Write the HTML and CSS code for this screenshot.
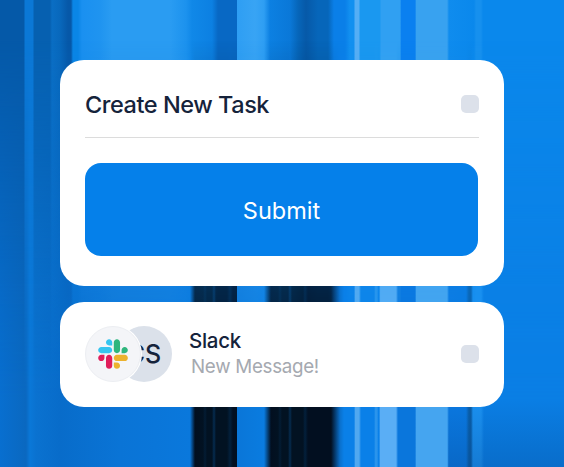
FILE: index.html
```html
<!DOCTYPE html>
<html lang="en">
<head>
<meta charset="utf-8">
<title>Create New Task</title>
<link rel="stylesheet" href="styles.css">
</head>
<body>
<div class="fade" aria-hidden="true"></div>
<main class="stack">
  <section class="card task">
    <header class="task-head">
      <h1 class="title">Create New Task</h1>
      <span class="check"></span>
    </header>
    <button class="submit" type="button">Submit</button>
  </section>
  <section class="card notify">
    <div class="avatars">
      <span class="avatar initials">CS</span>
      <span class="avatar logo">
        <svg class="slack" viewBox="0 0 127 127" aria-hidden="true">
          <path d="M27.2 80c0 7.3-5.9 13.2-13.2 13.2C6.7 93.2.8 87.3.8 80c0-7.3 5.9-13.2 13.2-13.2h13.2V80zm6.6 0c0-7.3 5.9-13.2 13.2-13.2 7.3 0 13.2 5.9 13.2 13.2v33c0 7.3-5.9 13.2-13.2 13.2-7.3 0-13.2-5.9-13.2-13.2V80z" fill="#E01E5A"/>
          <path d="M47 27c-7.3 0-13.2-5.9-13.2-13.2C33.8 6.5 39.7.6 47 .6c7.3 0 13.2 5.9 13.2 13.2V27H47zm0 6.7c7.3 0 13.2 5.9 13.2 13.2 0 7.3-5.9 13.2-13.2 13.2H13.9C6.6 60.1.7 54.2.7 46.9c0-7.3 5.9-13.2 13.2-13.2H47z" fill="#36C5F0"/>
          <path d="M99.9 46.9c0-7.3 5.9-13.2 13.2-13.2 7.3 0 13.2 5.9 13.2 13.2 0 7.3-5.9 13.2-13.2 13.2H99.9V46.9zm-6.6 0c0 7.3-5.9 13.2-13.2 13.2-7.3 0-13.2-5.9-13.2-13.2V13.8C66.9 6.5 72.8.6 80.1.6c7.3 0 13.2 5.9 13.2 13.2v33.1z" fill="#2EB67D"/>
          <path d="M80.1 99.8c7.3 0 13.2 5.9 13.2 13.2 0 7.3-5.9 13.2-13.2 13.2-7.3 0-13.2-5.9-13.2-13.2V99.8h13.2zm0-6.6c-7.3 0-13.2-5.9-13.2-13.2 0-7.3 5.9-13.2 13.2-13.2h33.1c7.3 0 13.2 5.9 13.2 13.2 0 7.3-5.9 13.2-13.2 13.2H80.1z" fill="#ECB22E"/>
        </svg>
      </span>
    </div>
    <div class="message">
      <div class="sender">Slack</div>
      <div class="preview">New Message!</div>
    </div>
    <span class="check"></span>
  </section>
</main>
</body>
</html>
```

FILE: styles.css
```css
* { box-sizing: border-box; }
html, body { margin: 0; height: 467px; overflow: hidden; }
body {
  position: relative;
  font-family: Inter, "Liberation Sans", sans-serif;
  background: linear-gradient(90deg,
    #0559a8 0, #0559a8 24px, #0b78d6 25px, #0b78d6 33px, #0660b0 34px, #0660b0 50px,
    #0a6ec4 52px, #0868bc 60px, #0658a8 68px, #0658a8 71px, #0a86e6 73px, #0a86e6 78px,
    #1a90f0 82px, #1f94f0 100px, #2a9cf2 112px, #2a9cf2 170px, #1c92ee 186px,
    #1088e8 192px, #0c80e2 212px, #0868c4 218px, #0868c4 236.5px, #2e9ef3 237px,
    #38a4f4 255px, #2e9ef3 264px, #0c80e2 270px, #0a78d8 290px, #0666ba 298px,
    #0659a8 306px, #0666ba 318px, #0666ba 328px, #0a7fe8 334px, #0a7fe8 345px,
    #1290f0 350px, #1290f0 354px, #55aef5 355px, #55aef5 359px, #1a98f0 360px,
    #1a98f0 380px, #30a0f2 381px, #30a0f2 400px, #0a80f0 401.5px, #0a80f0 415px,
    #38a2f0 416.5px, #38a2f0 447px, #0f8cee 449px, #0a88ec 474px, #1690ee 476px,
    #1690ee 481px, #0a88ec 483px, #0a88ec 564px);
}
.fade {
  position: absolute;
  inset: 0;
  background:
    linear-gradient(180deg, transparent 400px, rgba(4, 48, 110, .22) 467px) right top / 116px 100% no-repeat,
    linear-gradient(90deg,
    #086fd0 0, #0a68c0 26px, #0a78d8 30px, #0a72d0 36px, #086cca 60px, #0a74d6 120px,
    #0a78dc 190px, #020f20 195px, #021222 203px, #031c34 205px, #021222 207px, #021222 212px,
    #052c50 214px, #021222 216px, #021222 227px, #03203c 230px, #020f20 233px, #020f20 236.5px,
    #0a76d8 237px, #0a7ce0 264px, #020f20 271px, #021222 278px, #031c34 280px, #021222 282px,
    #021222 288px, #052c50 290px, #021222 292px, #021222 303px, #03203c 305px, #020f20 308px,
    #020f20 331px, #0a70cc 340px, #0a80e8 344px, #0a80e8 354px, #50a8f0 355.5px,
    #50a8f0 359px, #0a80e8 361px, #0a80e8 374px, #2a94ec 375.5px, #2a94ec 377px,
    #0a80e8 378.5px, #0a80e8 379px, #5aaef5 380.5px, #5aaef5 396px, #0a76dc 398px,
    #0a76dc 415px, #45a5f0 416.5px, #45a5f0 447px, #0a78e0 449px, #0a78e0 466px,
    #0a5ea8 469px, #0a5ea8 471px, #1a90f0 473px, #1a90f0 481px, #0a7ee4 484px, #0a7ee4 564px);
  -webkit-mask-image: linear-gradient(180deg, transparent 40px, rgba(0, 0, 0, .78) 294px, #000 400px);
  mask-image: linear-gradient(180deg, transparent 40px, rgba(0, 0, 0, .78) 294px, #000 400px);
}
.stack {
  position: relative;
  display: flex;
  flex-direction: column;
  gap: 16px;
  width: 444px;
  margin-left: 60px;
  padding-top: 60px;
}
.card { background: #fff; border-radius: 24px; }
.task { height: 226px; padding: 0 25px; }
.task-head {
  display: flex;
  align-items: center;
  justify-content: space-between;
  height: 78px;
  padding-top: 11px;
  margin-bottom: 25px;
  border-bottom: 1px solid #dcdcdc;
}
.title { margin: 0; font-size: 23.5px; font-weight: 500; letter-spacing: -0.45px; color: #15233b; }
.check { width: 18px; height: 18px; flex: none; border-radius: 5px; background: #dce1ea; }
.submit {
  display: block;
  width: 393px;
  height: 93px;
  padding: 2px 0 0;
  border: 0;
  border-radius: 16px;
  background: #0580ea;
  color: #fff;
  font: 400 23.5px Inter, "Liberation Sans", sans-serif;
}
.notify {
  display: flex;
  align-items: center;
  height: 105px;
  padding: 0 25px 1px;
}
.avatars { position: relative; width: 87px; height: 56px; flex: none; }
.avatar {
  position: absolute;
  top: 0;
  display: flex;
  align-items: center;
  justify-content: center;
  width: 56px;
  height: 56px;
  border-radius: 50%;
}
.initials { left: 31px; background: #dbe1ea; color: #15233b; font-size: 25px; font-weight: 500; }
.logo { left: 0; background: #f4f5f8; border: 1px solid #eceef2; box-shadow: 0 0 0 1px #fff; }
.slack { width: 30px; height: 30px; }
.message { flex: 1; margin-left: 17px; margin-top: -1px; }
.sender { font-size: 20.5px; font-weight: 500; letter-spacing: -0.3px; color: #15233b; line-height: 26px; }
.preview { margin: 1px 0 0 2px; font-size: 18.8px; letter-spacing: -0.3px; color: #a5a9b0; line-height: 24px; }
```
